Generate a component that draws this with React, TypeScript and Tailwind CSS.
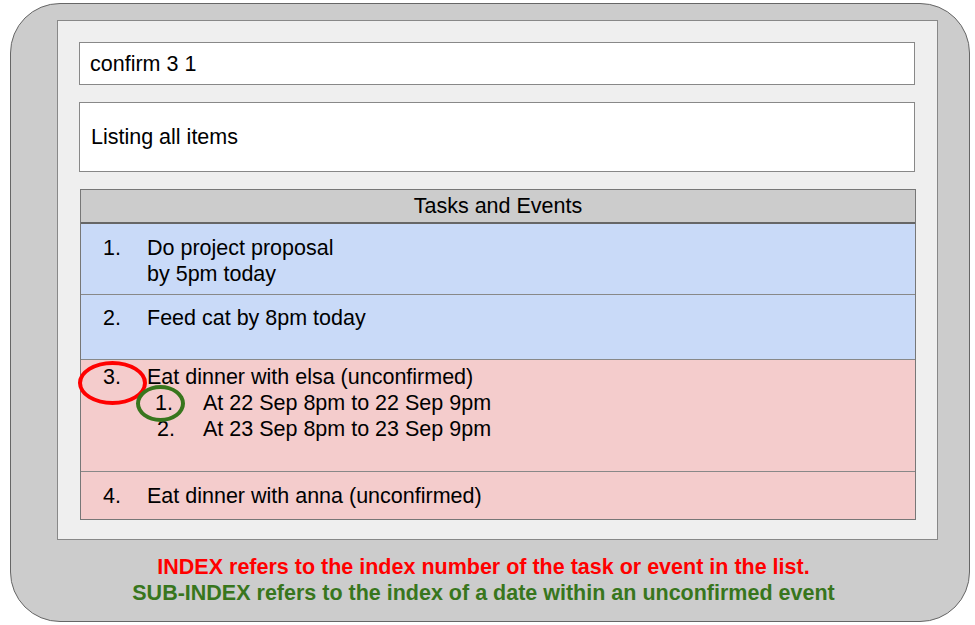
export default function App() {
  return (
    <div className="w-[975px] h-[625px] bg-white pt-[3px] pl-[10px] font-['Liberation_Sans',Arial,sans-serif] text-black">
      <div className="w-[960px] h-[619px] rounded-[50px] border border-[#666] bg-[#cccccc] pl-[46px] pt-[16px]">
        {/* main window */}
        <div className="w-[881px] h-[520px] border border-[#888] bg-[#efefef] pl-[21px] pt-[21px]">
          <div className="w-[836px] h-[43px] border border-[#888] bg-white flex items-center pl-[10px] text-[21.5px] leading-[26px]">
            confirm 3 1
          </div>
          <div className="mt-[17px] w-[836px] h-[70px] border border-[#888] bg-white flex items-center pl-[11px] text-[21.5px] leading-[26px]">
            Listing all items
          </div>

          <div className="mt-[17px] ml-[1px] w-[836px] border border-[#777] text-[21.5px] leading-[26px]">
            <div className="h-[34px] bg-[#cccccc] border-b-2 border-[#666] flex items-center justify-center">
              Tasks and Events
            </div>

            <div className="h-[71px] bg-[#c9daf8] border-b border-[#888] flex pt-[11px] pl-[22px]">
              <span className="w-[44px] shrink-0">1.</span>
              <span>
                Do project proposal
                <br />
                by 5pm today
              </span>
            </div>

            <div className="h-[65px] bg-[#c9daf8] border-b border-[#888] flex pt-[10px] pl-[22px]">
              <span className="w-[44px] shrink-0">2.</span>
              <span>Feed cat by 8pm today</span>
            </div>

            <div className="relative h-[112px] bg-[#f4cccc] border-b border-[#888] flex pt-[4px] pl-[22px]">
              <span className="w-[44px] shrink-0">3.</span>
              <div className="flex flex-col">
                <span>Eat dinner with elsa (unconfirmed)</span>
                <div className="flex">
                  <span className="w-[56px] pl-[8px] shrink-0">1.</span>
                  <span>At 22 Sep 8pm to 22 Sep 9pm</span>
                </div>
                <div className="flex">
                  <span className="w-[56px] pl-[10px] shrink-0">2.</span>
                  <span>At 23 Sep 8pm to 23 Sep 9pm</span>
                </div>
              </div>
              {/* highlight rings */}
              <div className="absolute left-[-3px] top-[1px] w-[69px] h-[44px] rounded-[50%] border-4 border-[#ff0000]" />
              <div className="absolute left-[55px] top-[25px] w-[49px] h-[37px] rounded-[50%] border-4 border-[#38761d]" />
            </div>

            <div className="h-[47px] bg-[#f4cccc] flex pt-[11px] pl-[22px]">
              <span className="w-[44px] shrink-0">4.</span>
              <span>Eat dinner with anna (unconfirmed)</span>
            </div>
          </div>
        </div>

        <div className="mt-[14px] pr-[59px] text-center font-bold text-[21.5px] leading-[26px]">
          <p className="text-[#ff0000]">INDEX refers to the index number of the task or event in the list.</p>
          <p className="text-[#38761d]">SUB-INDEX refers to the index of a date within an unconfirmed event</p>
        </div>
      </div>
    </div>
  );
}
